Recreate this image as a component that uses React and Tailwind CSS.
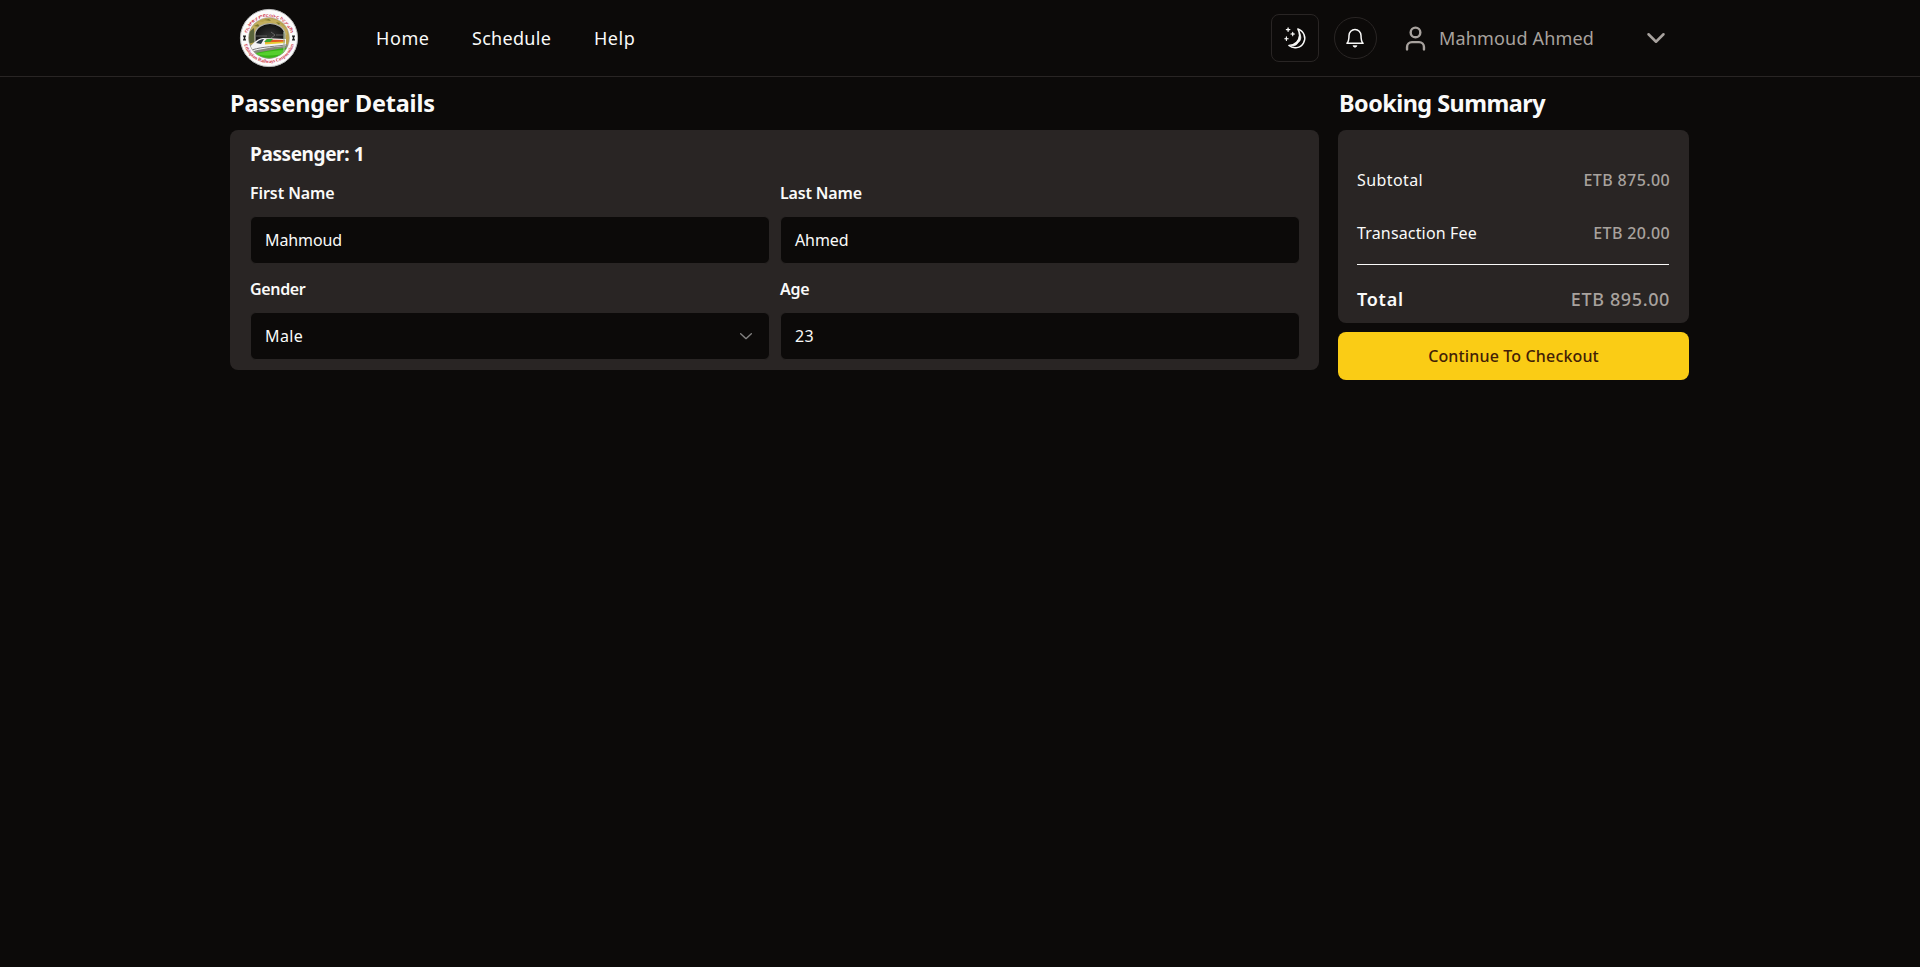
import { ChevronDown, User } from "lucide-react";
import { RxChevronDown } from "react-icons/rx";

function RailwayLogo() {
  return (
    <svg className="size-[60px]" viewBox="0 0 60 60" role="img">
      <defs>
        <radialGradient id="tunnel" cx="0.5" cy="0.55" r="0.6">
          <stop offset="0" stopColor="#3a3a3a" />
          <stop offset="1" stopColor="#0d0d0d" />
        </radialGradient>
        <clipPath id="scene">
          <circle cx="30" cy="30" r="20.4" />
        </clipPath>
        <path id="arc-top" d="M7.6 31 A22.4 22.4 0 0 1 52.4 31" />
        <path id="arc-bottom" d="M4 29 A26 26 0 0 0 56 29" />
      </defs>
      <circle cx="30" cy="30" r="28.6" fill="#fbfbfb" stroke="#b9b9b9" strokeWidth="1" />
      <g clipPath="url(#scene)">
        <rect x="8" y="8" width="44" height="44" fill="#b9a24c" />
        <path d="M12 18l5-5 7 1 5-4 8 2 6 5 5 4v6H8z" fill="#c2ad5c" />
        <path d="M15 18l4-2 2 3zM25 12l5-1 2 2zM37 14l4 1-1 2z" fill="#7c7a2c" />
        <path d="M10 24l5-4 1 14-7 2z" fill="#59643a" />
        <path d="M16 38V26C18 12 44 12 46 26v17z" fill="url(#tunnel)" stroke="#b4b4ac" strokeWidth="1.2" />
        <path d="M17 28h11M32 24l4 3-4 3M37 27h7" stroke="#888" strokeWidth="0.6" fill="none" />
        <path d="M9 37l36-3 6 5v14H9z" fill="#86887c" />
        <path d="M9 46c10-1 22-4 42-7v14H9z" fill="#35b316" />
        <path d="M16 46c10-2 22-4 33-4v3c-9 2-20 4-33 1z" fill="#56cf2e" />
        <path d="M9 42c3-5 8-11 15-12l23 1v7c-13 1-20 2-37 6z" fill="#f4f4f4" />
        <path d="M17 35c3-3 5-4 8-4l-3 5z" fill="#303b45" />
        <path d="M27 31.500l19 .5v2l-20 1z" fill="#e05b24" />
        <path d="M26 34.500l20-1v1.600l-20 1.400z" fill="#e8cb2e" />
        <path d="M28 31h6l-3 3h-6z" fill="#38a832" />
        <path d="M10 43c10-4 20-4 37-6" stroke="#7b7b7b" strokeWidth="1" fill="none" />
        <path d="M45 24v24" stroke="#a7b99c" strokeWidth="1.200" />
      </g>
      <circle cx="30" cy="30" r="20.4" fill="none" stroke="#a5a5a5" strokeWidth="0.6" />
      <path d="M4 27.500h3v1.200h-.7v2.600H7v1.200H4v-1.200h.7v-2.600H4zM53 27.500h3v1.200h-.7v2.600h.7v1.200h-3v-1.200h.7v-2.600H53z" fill="#1c1c1c" />
      <text className="fill-[#d03a4e] text-[4.6px] font-semibold">
        <textPath href="#arc-top" startOffset="50%" textAnchor="middle" textLength="57">የኢትዮጵያ ምድር ባቡር ኮርፖሬሽን</textPath>
      </text>
      <text className="fill-[#cf3348] font-['Liberation_Serif',serif] text-[4.9px] font-bold">
        <textPath href="#arc-bottom" startOffset="50%" textAnchor="middle" textLength="66">Ethiopian Railways Corporation</textPath>
      </text>
    </svg>
  );
}

function MoonIcon() {
  return (
    <svg className="ml-px size-6" viewBox="0 0 24 24" fill="none" stroke="currentColor" strokeLinejoin="round" strokeLinecap="round">
      <path d="M13.900 3A9.600 9.600 0 1 1 4.900 19.500C11.500 19 15.500 14.500 15.600 9.500 15.600 7 15 4.800 13.900 3z" strokeWidth="1.500" />
      <path d="M15.800 7.500c1.500 2.800 1.200 5.300.2 7.200-.7 1.300-1.800 1.400-2.400 2.700-.8 1.700-3.600 2.700-6.600 2.500 4.500-1.400 8.600-5.400 8.800-12.400z" fill="currentColor" strokeWidth="0.700" />
      <path d="M4.100 1.800v3.600M2.300 3.600h3.600M8.700 6.200v3.600M6.900 8h3.600M2.400 10.900v3.600M.8 12.700h3.400" strokeWidth="1.100" />
      <path d="M4.100 2.600l1 1-1 1-1-1zM8.700 7l1 1-1 1-1-1zM2.400 11.700l1 1-1 1-1-1z" fill="currentColor" strokeWidth="0.300" />
    </svg>
  );
}

function BellIcon() {
  return (
    <svg className="mr-px size-6" viewBox="0 0 24 24" fill="none" stroke="currentColor" strokeWidth="1.500" strokeLinejoin="round" strokeLinecap="round">
      <path d="M3.900 17.200C5.500 15.700 6 13.600 6 9.400a6 6 0 0 1 12 0c0 4.200.5 6.300 2.100 7.800z" />
      <path d="M10.200 20.100c.6 1.500 3 1.500 3.600 0z" fill="currentColor" strokeWidth="0.900" />
    </svg>
  );
}

function Field({ label, value, labelClass, valueClass, select }) {
  return (
    <div className="pt-[13px]">
      <div className={"h-[35px] text-base leading-6 font-semibold " + labelClass}>{label}</div>
      <div className="flex h-12 items-center justify-between rounded-md border border-[#292524] bg-[#0c0a09] pr-[13px] pl-[14px] text-base">
        <span className={valueClass}>{value}</span>
        {select && <RxChevronDown className="mb-[2px] size-5 opacity-50" />}
      </div>
    </div>
  );
}

export default function App() {
  return (
    <div className="min-h-screen bg-[#0c0a09] font-['Noto_Sans',sans-serif] text-[#fafaf9]">
      <header className="h-[77px] border-b border-[#292524]">
        <div className="flex h-[76px] items-center pr-[249px] pl-[239px]">
          <RailwayLogo />
          <nav className="ml-[77px] flex gap-[42px] text-lg">
            <a className="w-[54px] tracking-[0.58px]">Home</a>
            <a className="w-[80px] tracking-[0.3px]">Schedule</a>
            <a className="tracking-[0.52px]">Help</a>
          </nav>
          <div className="ml-auto flex items-center">
            <button className="flex size-12 items-center justify-center rounded-lg border border-[#292524]">
              <MoonIcon />
            </button>
            <button className="ml-[15px] flex h-[42px] w-[43px] items-center justify-center rounded-full border border-[#292524]">
              <BellIcon />
            </button>
            <button className="ml-6 flex items-center text-[#a8a29e]">
              <User size={29} strokeWidth={2} />
              <span className="ml-[9px] w-[202px] text-left text-lg tracking-[0.17px]">Mahmoud Ahmed</span>
              <ChevronDown size={30} strokeWidth={2} />
            </button>
          </div>
        </div>
      </header>

      <main className="flex gap-[19px] pr-[231px] pl-[230px]">
        <section className="w-[1089px]">
          <h2 className="h-[53px] text-[23.4px] leading-[53px] font-bold tracking-[-0.15px]">Passenger Details</h2>
          <div className="rounded-lg bg-[#292524] py-[10px] pr-[19px] pl-5">
            <h3 className="text-[19px] leading-7 font-bold tracking-[-0.4px]">Passenger: 1</h3>
            <div className="grid grid-cols-2 gap-x-[10px]">
              <Field label="First Name" value="Mahmoud" labelClass="tracking-[-0.08px]" valueClass="tracking-[-0.1px]" />
              <Field label="Last Name" value="Ahmed" labelClass="tracking-[-0.16px]" valueClass="tracking-[-0.1px]" />
              <Field label="Gender" value="Male" labelClass="tracking-[-0.35px]" valueClass="tracking-[0.4px]" select />
              <Field label="Age" value="23" labelClass="tracking-[-0.2px]" valueClass="tracking-[0.4px]" />
            </div>
          </div>
        </section>

        <section className="flex-1">
          <h2 className="h-[53px] pl-px text-[23.4px] leading-[53px] font-bold tracking-[-0.52px]">Booking Summary</h2>
          <div className="h-[193px] rounded-lg bg-[#292524] pt-[38px] pr-5 pl-[19px]">
            <div className="flex justify-between text-base leading-6">
              <span className="tracking-[0.41px]">Subtotal</span>
              <span className="-mr-px font-medium tracking-[0.39px] text-[#a8a29e]">ETB 875.00</span>
            </div>
            <div className="mt-[29px] flex justify-between text-base leading-6">
              <span className="tracking-[0.16px]">Transaction Fee</span>
              <span className="-mr-px font-medium tracking-[0.36px] text-[#a8a29e]">ETB 20.00</span>
            </div>
            <div className="mt-[19px] h-px bg-[#fafaf9]" />
            <div className="mt-5 flex justify-between text-lg leading-7">
              <span className="font-semibold tracking-[0.75px]">Total</span>
              <span className="-mr-px font-medium tracking-[0.62px] text-[#a8a29e]">ETB 895.00</span>
            </div>
          </div>
          <button className="mt-[9px] h-12 w-full rounded-lg bg-[#facc15] text-base font-medium tracking-[0.15px] text-[#422006]">
            Continue To Checkout
          </button>
        </section>
      </main>
    </div>
  );
}
